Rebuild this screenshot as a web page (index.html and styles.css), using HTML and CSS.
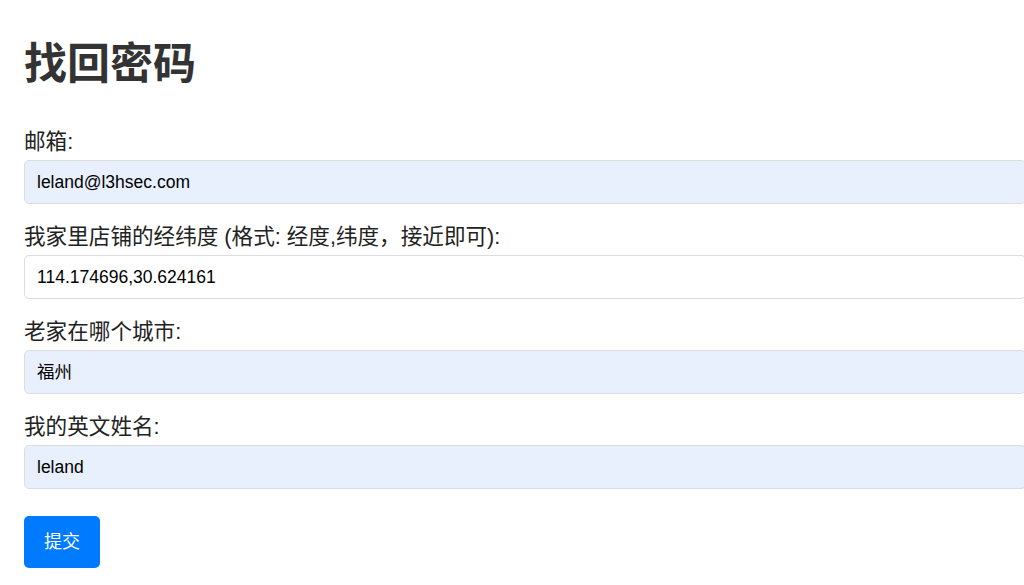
FILE: index.html
```html
<!DOCTYPE html>
<html>
<head>
  <title>找回密码</title>
  <link rel="stylesheet" href="styles.css">
</head>
<body>
  <h1>找回密码</h1>
  <form class="reset-form">
    <div class="form-group">
      <label for="email">邮箱:</label>
      <input type="text" id="email" class="filled" value="leland@l3hsec.com">
    </div>
    <div class="form-group">
      <label for="location">我家里店铺的经纬度 (格式: 经度,纬度，接近即可):</label>
      <input type="text" id="location" value="114.174696,30.624161">
    </div>
    <div class="form-group">
      <label for="hometown">老家在哪个城市:</label>
      <input type="text" id="hometown" class="filled" value="福州">
    </div>
    <div class="form-group">
      <label for="ename">我的英文姓名:</label>
      <input type="text" id="ename" class="filled" value="leland">
    </div>
    <button type="submit">提交</button>
  </form>
</body>
</html>
```

FILE: styles.css
```css
body {
  font-family: "Liberation Sans", Arial, "Noto Sans CJK SC", sans-serif;
  font-size: 18px;
  margin: 0;
  padding: 24px;
  color: #222;
  background: #fff;
}

h1 {
  font-size: 43px;
  color: #333;
  margin: 5px 0 33px;
}

.form-group {
  margin-bottom: 15px;
}

label {
  display: block;
  font-size: 1.2em;
  margin-bottom: 5px;
}

input {
  width: 100%;
  padding: 11px 12px;
  font-size: 17.5px;
  line-height: 20px;
  height: 20px;
  font-family: inherit;
  border: 1px solid #ddd;
  border-radius: 5px;
  background: #fff;
  color: #000;
}

input.filled {
  background: #e8f0fe;
}

button {
  margin-top: 12px;
  padding: 13px 20px;
  font-size: 18px;
  line-height: 26px;
  font-family: inherit;
  color: #fff;
  background: #007bff;
  border: none;
  border-radius: 5px;
}
```
